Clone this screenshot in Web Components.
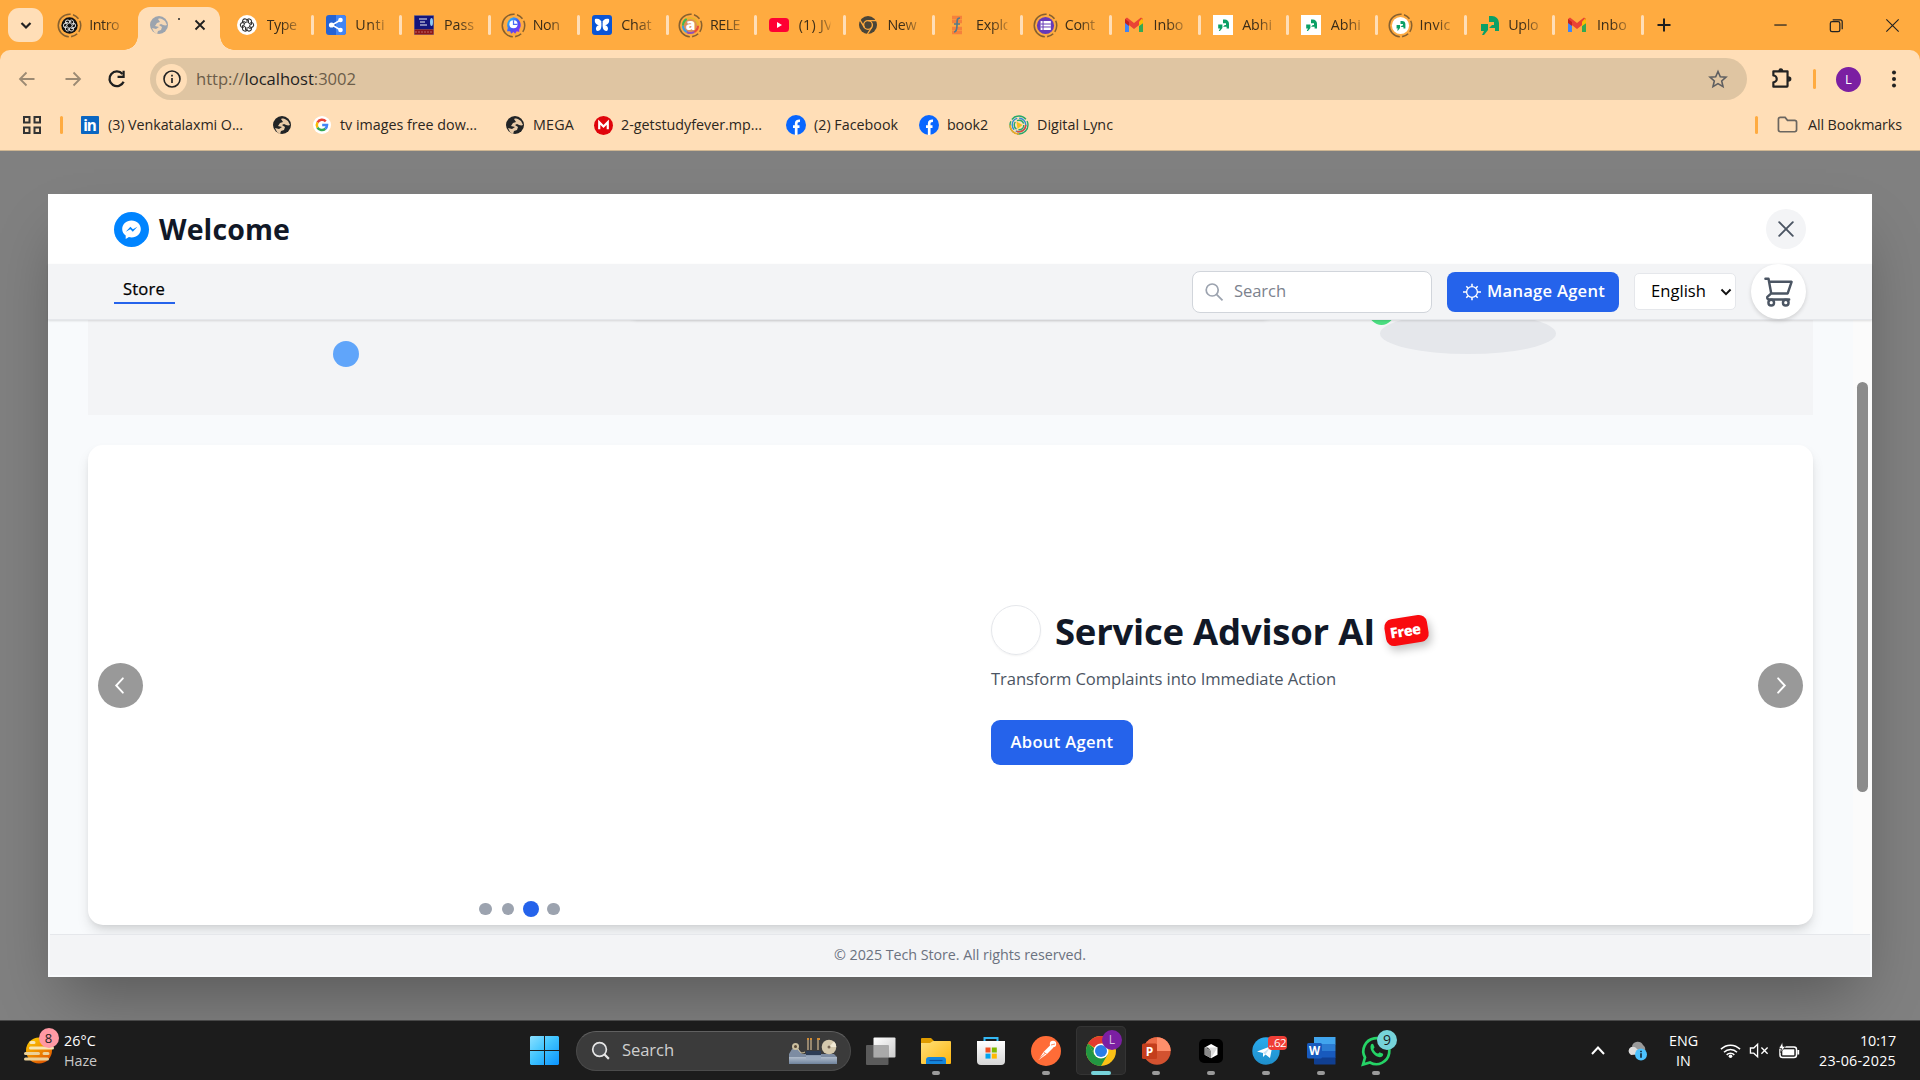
<!DOCTYPE html>
<html lang="en">
<head>
<meta charset="utf-8">
<title>Tech Store</title>
<style>
html,body{margin:0;height:100%;overflow:hidden}
body{font-family:"Open Sans","Noto Sans",sans-serif;background:#808080}
</style>
</head>
<body>
<desktop-screen></desktop-screen>
<script>
const define=(name,html,init)=>{
  const t=document.createElement('template');t.innerHTML=html;
  customElements.define(name,class extends HTMLElement{
    constructor(){super();this.attachShadow({mode:'open'}).append(t.content.cloneNode(true));}
    connectedCallback(){init&&init.call(this,this.shadowRoot);}
  });
};

/* One line of text tracked to occupy an exact width. */
define('fit-text','<style>:host{display:block;flex:none;white-space:pre;line-height:1.36}span{display:inline-block}</style><span><slot></slot></span>',function(r){
  const w=+this.getAttribute('w'),s=r.querySelector('span');
  this.style.width=w+'px';
  this.style.fontSize=this.getAttribute('size')+'px';
  const n=this.textContent.length;
  s.style.letterSpacing='0px';
  const nat=s.getBoundingClientRect().width;
  s.style.letterSpacing=((w-nat)/n)+'px';
});

const quote=c=>`<path fill="${c}" d="M2 9h7v6l-4 5H3l2-4H2zM10 1h3a7 7 0 0 1 7 7v8h-4v-3h-6l3-3h2V7h-5z"/>`;
const gmail='<path d="M1 4v13h4V9" fill="#4285f4"/><path d="M19 4v13h-4V9" fill="#34a853"/><path d="M15 5l4-2v5l-4 3z" fill="#fbbc04"/><path d="M1 4l2-1.500 7 5.500 7-5.500L19 4v3l-9 7-9-7z" fill="#ea4335"/><path d="M1 4l4 3v4L1 8z" fill="#c5221f"/><path d="M15 6.800l3-3.300 1 1.500v3l-4 3z" fill="#fbbc04"/>';
const ring='<circle cx="13" cy="13" r="11.700" fill="none" stroke="#86602f" stroke-width="1.600" stroke-dasharray="7 2.500 7 2.500 37 2.500 7 2.500"/>';
const inner=(s,k=.85)=>`${ring}<g transform="translate(${13-10*k} ${13-10*k}) scale(${k})">${s}</g>`;
const knot=c=>{let s='';for(let i=0;i<6;i++)s+=`<path transform="rotate(${i*60} 10 10)" d="M10 7.500V4.600a2.700 2.700 0 0 1 5 .8V9l-2.500 1.500" fill="none" stroke="${c}" stroke-width="1.200"/>`;return s;};
const globe=(a,b)=>`<circle cx="10" cy="10" r="9" fill="${a}"/><path fill="${b}" d="M9 4c3-1 4 0 7 2l2 4c-2 1-4 0-6-1l-2 1 3 2-1 3-3 1-1 3-3-2-2-4 4 1 3-2-4-1 2-3 3-1z" opacity=".9"/>`;
const cube='<path fill="#fff" d="M12 3l8 4.500v9L12 21l-8-4.500v-9z"/><path fill="#888" d="M4 7.500L12 12v9l-8-4.500z"/><path fill="#ddd" d="M4 7.500h16L12 21v-9z"/><path fill="#555" d="M12 12L4 7.500h4z"/>';
const facebook='<circle cx="10" cy="10" r="10" fill="#0866ff"/><path d="M10.200 20v-8M7 11.600h6.500M10.200 13V8.500q0-3 3.800-2.700" fill="none" stroke="#fff" stroke-width="2.700"/>';
const ic={
 down:['0 0 20 20','<path d="M5.500 8l4.500 4.500L14.500 8" fill="none" stroke="#222" stroke-width="2.200"/>'],
 gptDark:['0 0 26 26',inner('<circle cx="10" cy="10" r="10" fill="#111"/>'+knot('#ddd'))],
 gpt:['0 0 20 20','<circle cx="10" cy="10" r="10" fill="#fff"/><g transform="translate(1 1) scale(.9)">'+knot('#333')+'</g>'],
 globeGrey:['0 0 20 20',globe('#9ca4ae','#ffdeb7')],
 globe:['0 0 20 20',globe('#222426','#ffdeb7')],
 share:['0 0 20 20','<rect width="20" height="20" rx="3" fill="#2563d4"/><path d="M10 0h7a3 3 0 0 1 3 3v14a3 3 0 0 1-3 3h-7z" fill="#4285f4"/><path d="M14.500 5L6 10l8.500 5" fill="none" stroke="#fff" stroke-width="1.500"/><g fill="#fff"><circle cx="14.500" cy="5" r="2.300"/><circle cx="5.500" cy="10" r="2.600"/><circle cx="14.500" cy="15" r="2.300"/></g>'],
 pass:['0 0 20 20','<rect width="20" height="20" fill="#98807c"/><rect x=".5" y=".8" width="19" height="13.500" fill="#13147c"/><rect x=".5" y="14.500" width="19" height="5" fill="#8d1618"/><path d="M5 4h8M6 7h5M6 10h7" stroke="#a8a8cc" stroke-width="1.500"/><ellipse cx="17.500" cy="7" rx="1.500" ry="4" fill="#8fc8f0"/><path d="M1 17h17" stroke="#b66" stroke-dasharray="2 1"/>'],
 non:['0 0 26 26',`<defs><linearGradient id="g" x1="0" y1="0" x2="1" y2="1"><stop offset="0" stop-color="#16d6fa"/><stop offset=".55" stop-color="#4a50f4"/><stop offset="1" stop-color="#a02bf0"/></linearGradient></defs>`+inner('<path d="M10 0a9.500 9.500 0 0 1 7 15v3l-3-1-2 3-2-2-3 2-1-3-4 0 1-4A9.500 9.500 0 0 1 10 0z" fill="url(#g)"/><circle cx="10" cy="8.500" r="5" fill="#fff"/><path d="M10 3.500v5h5" fill="none" stroke="#4a6cf4" stroke-width="1.500"/>')],
 butterfly:['0 0 20 20','<rect width="20" height="20" rx="3" fill="#0a55d6"/><path fill="#fff" d="M3 4c4-1 6 1 7 4 1-3 3-5 7-4 1 4-2 6-4 6 3 1 4 4 2 6-3 0-4-2-5-5-1 3-2 5-5 5-2-2-1-5 2-6-2 0-5-2-4-6z"/><path d="M10 7v9" stroke="#0a55d6" stroke-width="1.200"/>'],
 rele:['0 0 26 26',inner('<circle cx="10" cy="10" r="9" fill="none" stroke="#e94b3c" stroke-width="3" stroke-dasharray="9.400 47"/><circle cx="10" cy="10" r="9" fill="none" stroke="#8e54b8" stroke-width="3" stroke-dasharray="9.400 47" stroke-dashoffset="-9.400"/><circle cx="10" cy="10" r="9" fill="none" stroke="#3d9ce0" stroke-width="3" stroke-dasharray="9.400 47" stroke-dashoffset="-18.800"/><circle cx="10" cy="10" r="9" fill="none" stroke="#46b450" stroke-width="3" stroke-dasharray="9.400 47" stroke-dashoffset="-28.200"/><circle cx="10" cy="10" r="9" fill="none" stroke="#e8b52c" stroke-width="3" stroke-dasharray="19 38" stroke-dashoffset="-37.600"/><circle cx="10" cy="10" r="8" fill="#dc8f55"/><text x="10" y="16" text-anchor="middle" font-size="19" font-weight="800" fill="#fff">a</text>')],
 youtube:['0 0 20 20','<rect y="3" width="20" height="14" rx="3.500" fill="#ff0033"/><path d="M8 7l5 3-5 3z" fill="#fff"/>'],
 chromeDark:['0 0 20 20','<circle cx="10" cy="10" r="9" fill="#4a4538"/><circle cx="10" cy="10" r="4.400" fill="none" stroke="#ffab40" stroke-width="1.400"/><path d="M10 5.600h8.500M6.200 12.200L2 5M13.800 12.200L9.500 19" stroke="#ffab40" stroke-width="1.400"/>'],
 italic:['0 0 20 20','<path d="M5 2.500h10M5 6.500h10M5 13.500h10M5 17.500h10" stroke="#f5813c" stroke-width="3.500"/><path d="M13 3c-3 0-3 2-3 7s-1 7-3 7M7 9h6" fill="none" stroke="#56798a" stroke-width="1.700"/>'],
 form:['0 0 26 26',inner('<circle cx="10" cy="10" r="10.500" fill="#673ab7"/><rect x="4" y="4.500" width="12.500" height="11" fill="#fff"/><path d="M4 8.200h12.500M4 11.800h12.500M7 4v12" stroke="#673ab7" stroke-width="1.200"/>')],
 gmail:['0 0 20 20',gmail],
 abhi:['0 0 20 20','<rect width="20" height="20" fill="#fff"/><g transform="translate(4 4) scale(.6)">'+quote('#0ba066')+'</g>'],
 invic:['0 0 26 26',inner('<circle cx="10" cy="10" r="10.500" fill="#fff"/><g transform="translate(4 4) scale(.6)">'+quote('#0ba066')+'</g>')],
 uplo:['0 0 20 20',quote('#0ba066')],
 plus:['0 0 20 20','<path d="M10 3.500v13M3.500 10h13" stroke="#1f1f1f" stroke-width="2"/>'],
 tabx:['0 0 20 20','<path d="M5 5l10 10M15 5L5 15" stroke="#1f1f1f" stroke-width="2"/>'],
 min:['0 0 20 20','<path d="M3.500 9.500h13" stroke="#222" stroke-width="1.300"/>'],
 restore:['0 0 20 20','<rect x="3.500" y="6" width="10" height="10.500" rx="1.800" fill="none" stroke="#222" stroke-width="1.300"/><path d="M6 4h8a2 2 0 0 1 2 2v8" fill="none" stroke="#222" stroke-width="1.300"/>'],
 close:['0 0 20 20','<path d="M3.500 3.500l13 13M16.500 3.500l-13 13" stroke="#222" stroke-width="1.200"/>'],
 back:['0 0 20 20','<path d="M17.500 10H3.500M9.500 3.500L3 10l6.500 6.500" fill="none" stroke="#9c8a73" stroke-width="1.800"/>'],
 fwd:['0 0 20 20','<path d="M2.500 10h14M10.500 3.500L17 10l-6.500 6.500" fill="none" stroke="#9c8a73" stroke-width="1.800"/>'],
 reload:['0 0 20 20','<path d="M16 12.500A6.700 6.700 0 1 1 15 5.500" fill="none" stroke="#1f1f1f" stroke-width="2.100"/><path d="M17 2.500v6.500h-6.500V7H15V2.500z" fill="#1f1f1f"/>'],
 info:['0 0 20 20','<circle cx="10" cy="10" r="8" fill="none" stroke="#222" stroke-width="1.600"/><path d="M10 9v5M10 5.800v1.700" stroke="#222" stroke-width="1.700"/>'],
 star:['0 0 20 20','<path d="M10 2.500l2.300 5.200 5.700.5-4.300 3.800 1.300 5.600-5-3-5 3 1.300-5.600L2 8.200l5.700-.5z" fill="none" stroke="#5f5f60" stroke-width="1.600"/>'],
 puzzle:['0 0 22 22','<path d="M4 4h13v13.500q0 .5-.5.500H4V14a3 3 0 0 0 0-6.200z" fill="none" stroke="#222" stroke-width="2" stroke-linejoin="round"/><path d="M8.500 4a2.300 2.800 0 0 1 4.600 0M17.500 8.500a2.800 2.300 0 0 1 0 5" fill="#222"/>'],
 dots:['0 0 20 20','<g fill="#222"><circle cx="10" cy="3.500" r="2"/><circle cx="10" cy="10" r="2"/><circle cx="10" cy="16.500" r="2"/></g>'],
 apps:['0 0 20 20','<g fill="none" stroke="#333" stroke-width="2"><rect x="2" y="2" width="5.500" height="5.500"/><rect x="12.500" y="2" width="5.500" height="5.500"/><rect x="2" y="12.500" width="5.500" height="5.500"/><rect x="12.500" y="12.500" width="5.500" height="5.500"/></g>'],
 linkedin:['0 0 20 20','<rect width="20" height="20" rx="1" fill="#0a66c2"/><text x="10" y="16.500" text-anchor="middle" font-size="17" font-weight="700" fill="#fff" textLength="15">in</text>'],
 google:['0 0 20 20','<circle cx="10" cy="10" r="10" fill="#fff"/><g fill="none" stroke-width="2.800"><path d="M14.200 6A5.700 5.700 0 0 0 5 7.200" stroke="#ea4335"/><path d="M5 7.200a5.700 5.700 0 0 0 0 5.600" stroke="#fbbc05"/><path d="M5 12.800a5.700 5.700 0 0 0 8.700 1.400" stroke="#34a853"/><path d="M13.700 14.200A5.700 5.700 0 0 0 15.600 10H10.200" stroke="#4285f4"/></g>'],
 mega:['0 0 20 20','<circle cx="10" cy="10" r="10" fill="#e0040b"/><path d="M5.500 14V6.500l4.500 4.500 4.500-4.500V14" fill="none" stroke="#fff" stroke-width="2.300"/>'],
 facebook:['0 0 20 20',facebook],
 lync:['0 0 20 20','<g fill="none" stroke-width="1.400"><circle cx="10" cy="10" r="9" stroke="#28a86a" stroke-dasharray="16 2 14 2" /><circle cx="10" cy="10" r="9" stroke="#f5a623" stroke-dasharray="14 42.500" stroke-dashoffset="-14"/><circle cx="10" cy="10" r="6.800" stroke="#2d8fd8" stroke-dasharray="14 2"/><circle cx="10" cy="10" r="6.800" stroke="#e2463a" stroke-dasharray="13 30"/><circle cx="10" cy="10" r="4.800" stroke="#28a86a" stroke-dasharray="8 2"/></g><path d="M7.500 6.500l6 3.500-5 4z" fill="#f6c11e"/>'],
 folder:['0 0 22 18','<path d="M1.500 3.500q0-2 2-2h5l2.500 3h7.500q2 0 2 2v8q0 2-2 2h-15q-2 0-2-2z" fill="none" stroke="#6b6660" stroke-width="1.800"/>'],
 messenger:['0 0 35 35','<circle cx="17.500" cy="17.500" r="17.500" fill="#0084ff"/><path d="M17.500 8.500c-5.400 0-9.300 3.800-9.300 8.500 0 2.700 1.300 5 3.500 6.600v3.300l3.200-1.800c.8.300 1.700.4 2.600.4 5.400 0 9.300-3.900 9.300-8.500s-3.900-8.500-9.300-8.500z" fill="#fff"/><path d="M11.800 19.800l4.600-5 2.500 2.500 4.500-2.500-4.600 5-2.500-2.500z" fill="#0084ff"/>'],
 x:['0 0 20 20','<path d="M3.200 3.200l13.600 13.600M16.800 3.200L3.200 16.800" stroke="#4b5563" stroke-width="1.900" stroke-linecap="round"/>'],
 lens:['0 0 20 20','<circle cx="8.200" cy="8" r="6" fill="none" stroke="#9ca3af" stroke-width="1.700"/><path d="M12.500 12.300l6 6" stroke="#9ca3af" stroke-width="1.700"/>'],
 gear:['0 0 20 20','<circle cx="10" cy="10" r="5.400" fill="none" stroke="#fff" stroke-width="1.300"/><path d="M10 4.500V1.700M10 15.500v2.800M4.500 10H1M15.500 10H19M6 6L4.300 4.200M14 6l1.700-1.800M6 14l-1.700 1.800M14 14l1.700 1.800" stroke="#fff" stroke-width="1.500"/>'],
 chev:['0 0 20 20','<path d="M3.500 6.500l6.500 6.500 6.500-6.500" fill="none" stroke="#111" stroke-width="2.800"/>'],
 cart:['0 0 32 32','<g fill="none" stroke="#4b5563" stroke-width="2.500" stroke-linejoin="round" stroke-linecap="round"><path d="M2.500 2.800h3.200L8.500 18h17L29.500 6H6.500M8.500 18l-4 3.500q-.6 2.700 2 2.700h20.500"/><circle cx="8.500" cy="27.500" r="2.900"/><circle cx="23.500" cy="27.500" r="2.900"/></g>'],
 left:['0 0 20 20','<path d="M12.500 2.500L5.500 10l7 7.500" fill="none" stroke="#fff" stroke-width="2" stroke-linecap="round"/>'],
 right:['0 0 20 20','<path d="M7.500 2.500l7 7.500-7 7.500" fill="none" stroke="#fff" stroke-width="2" stroke-linecap="round"/>'],
 haze:['0 0 30 30','<defs><linearGradient id="h" x1="0" y1="0" x2=".6" y2="1"><stop offset="0" stop-color="#ffd500"/><stop offset="1" stop-color="#e25a00"/></linearGradient></defs><circle cx="15" cy="14.500" r="13" fill="url(#h)"/><g stroke="#f8e6b4" stroke-width="3" stroke-linecap="round"><path d="M7 6.500h3M6.500 12h22"/><path d="M1.500 17.500h13M20 17.500h4M1.500 23h22" stroke="#ecd29a"/></g>'],
 win:['0 0 29 29','<defs><linearGradient id="w" x1="0" y1="0" x2="29" y2="29" gradientUnits="userSpaceOnUse"><stop offset="0" stop-color="#8be0ff"/><stop offset=".45" stop-color="#41c5ff"/><stop offset="1" stop-color="#0a93ff"/></linearGradient></defs><path fill="url(#w)" d="M1 0h13v14H0V1zM15 0h13l1 1v13H15zM0 15h14v14H1l-1-1zM15 15h14v13l-1 1H15z"/>'],
 search:['0 0 20 20','<circle cx="9" cy="9" r="7.200" fill="#515356" stroke="#e6e6e6" stroke-width="1.800"/><path d="M14.300 14.300l4.500 4.500" stroke="#e6e6e6" stroke-width="2.300"/>'],
 engine:['0 0 50 28','<defs><linearGradient id="e" x1="0" y1="0" x2="0" y2="1"><stop offset="0" stop-color="#b0bccb"/><stop offset="1" stop-color="#70839c"/></linearGradient></defs><path d="M4 12l5-2 5 7h4l3-3h9l2 3h14l3 3v3H1v-6z" fill="#7d8ca2"/><rect x="1" y="20" width="48" height="7" fill="url(#e)"/><path d="M20 2v11M23 2v11M30 2v11" stroke="#c8b08b" stroke-width="1.300"/><path d="M19 2h2M22 2h2M29 2h3" stroke="#d08b35" stroke-width="2"/><rect x="18" y="14" width="15" height="4" fill="#2d3d56"/><rect x="18" y="18.500" width="15" height="4" fill="#97a7bc"/><circle cx="41" cy="10" r="7.300" fill="#d5c9ad"/><path d="M41 10l5-5.500A7.300 7.300 0 0 1 48.300 10z" fill="#f1e9d4"/><circle cx="41" cy="10" r="1.500" fill="#765"/><circle cx="7.500" cy="9.500" r="3.500" fill="#cbbf9f"/><circle cx="7.500" cy="9.500" r="1.500" fill="#5b4a36"/><path d="M10 12q3 6 7 3" fill="none" stroke="#d9c9a0"/>'],
 taskview:['0 0 30 30','<defs><linearGradient id="t" x1="0" y1="0" x2="1" y2="1"><stop offset="0" stop-color="#fff"/><stop offset="1" stop-color="#ccc"/></linearGradient></defs><rect x="7.500" y="1.500" width="22" height="20" rx="1" fill="url(#t)"/><rect x="0" y="9" width="22.500" height="20" rx="1" fill="#666" opacity=".85"/><path d="M7.500 9h15v12.500h-15z" fill="#aaa"/>'],
 files:['0 0 30 30','<defs><linearGradient id="f" x1="0" y1="0" x2="1" y2="1"><stop offset="0" stop-color="#ffe07a"/><stop offset="1" stop-color="#ffb60d"/></linearGradient></defs><path d="M0 3q0-1 1-1h9l3 3v5H0z" fill="#e09c00"/><path d="M0 7h9l3-2h17q1 0 1 1v21q0 1-1 1H1q-1 0-1-1z" fill="url(#f)"/><path d="M5 28v-4q0-3 3-3h14q3 0 3 3v4z" fill="#1486dc"/><path d="M8.500 24.500h13" stroke="#0b4f9e" stroke-width="1.200"/>'],
 store:['0 0 30 30','<path d="M8.500 6V2h13v4" fill="none" stroke="#34b8f4" stroke-width="2"/><defs><linearGradient id="s" x1="0" y1="0" x2="0" y2="1"><stop offset="0" stop-color="#fff"/><stop offset="1" stop-color="#d6d6d6"/></linearGradient></defs><path d="M1 5h28v20q0 4-4 4H5q-4 0-4-4z" fill="url(#s)"/><path d="M9.500 11.500h5v5h-5z" fill="#f25022"/><path d="M15.800 11.500h5v5h-5z" fill="#7fba00"/><path d="M9.500 17.600h5v5h-5z" fill="#00a4ef"/><path d="M15.800 17.600h5v5h-5z" fill="#ffb900"/>'],
 postman:['0 0 30 30','<circle cx="15" cy="15" r="15" fill="#ff6c37"/><path d="M7.500 24l5-8 7-7 3 2.500-7 7z" fill="#fff"/><path d="M12.500 16l3.500 2.500M8 23l6-5.500" stroke="#ff6c37" stroke-width=".8"/><circle cx="22" cy="8" r="3.200" fill="#fff"/><path d="M20 9l4-1" stroke="#ff6c37" stroke-width=".8"/>'],
 chrome:['0 0 30 30','<circle cx="15" cy="15" r="15" fill="#fbc116"/><path d="M15 15L2 7.500A15 15 0 0 1 28 7.500H15z" fill="#e33b2e"/><path d="M2 7.500A15 15 0 0 0 15 30l6.500-11.200L15 15 8.500 18.800z" fill="#229642"/><path d="M15 15L2 7.500 4 5h11z" fill="#e33b2e"/><path d="M2 7.500L8.500 18.800 12 15z" fill="#229642"/><circle cx="15" cy="15" r="7.500" fill="#fff"/><circle cx="15" cy="15" r="6" fill="#2a7de8"/>'],
 ppt:['0 0 30 30','<circle cx="16" cy="15" r="13.700" fill="#d35230"/><path d="M16 1.300A13.700 13.700 0 0 1 29.700 15H16z" fill="#ff8f6b"/><path d="M16 1.300V15H2.300A13.700 13.700 0 0 1 16 1.300z" fill="#ed6c47"/><rect x="1" y="7.500" width="15" height="15.500" rx="1.500" fill="#c43e1c"/><text x="8.500" y="19.500" text-anchor="middle" font-size="12" font-weight="700" fill="#fff">P</text>'],
 cursor:['0 0 30 30','<rect x="3" y="3" width="24" height="24" rx="5" fill="#000"/><g transform="translate(5.500 5.500) scale(.8)">'+cube+'</g>'],
 telegram:['0 0 30 30','<defs><linearGradient id="tg" x1="0" y1="0" x2="0" y2="1"><stop offset="0" stop-color="#2aabee"/><stop offset="1" stop-color="#1f8fcb"/></linearGradient></defs><circle cx="15" cy="15" r="13.700" fill="url(#tg)"/><path d="M6 15.500L21.500 9.500 19 22l-4.500-3.500-2.500 2.500v-4z" fill="#fff"/><path d="M12 17l7-5.500-4.500 7" fill="#c8e2f3"/>'],
 word:['0 0 30 30','<path d="M8 1h21.500v7.500H8z" fill="#41a5ee"/><path d="M8 8h21.500v7H8z" fill="#2b7cd3"/><path d="M8 15h21.500v7H8z" fill="#185abd"/><path d="M8 21.500h21.500V28q0 .5-.5.500H9q-1 0-1-1z" fill="#103f91"/><rect x="1" y="7" width="15" height="15.500" rx="1.500" fill="#185abd"/><text x="8.500" y="19" text-anchor="middle" font-size="11.500" font-weight="700" fill="#fff">W</text>'],
 whatsapp:['0 0 30 30','<path d="M2 28.500l2-7A13 13 0 1 1 9 26.500z" fill="none" stroke="#25d366" stroke-width="2.700"/><path d="M10 8.500c1-1 2-1 2.500.2l1 2.500c.2.600-1.300 1.500-1 2.200 1 2 2.300 3.200 4.300 4.200.7.300 1.500-1.500 2.200-1.200l2.600 1.200c1 .6.500 2.200-.5 3-5 3-14-6-11.100-12.100z" fill="#25d366"/>'],
 up:['0 0 20 20','<path d="M4 13l6-6.500 6 6.500" fill="none" stroke="#fff" stroke-width="2"/>'],
 cloud:['0 0 22 20','<path d="M6 5a6 6 0 0 1 11-1q3 2 2 6l-9 4z" fill="#999"/><path d="M5 14a4.500 4.500 0 0 1 0-8q4-1 6 2l6 5z" fill="#ddd"/><circle cx="15" cy="13.500" r="6" fill="#4cc2ff"/><path d="M15 12.300v4.500M15 9.800v1.500" stroke="#123" stroke-width="1.600"/>'],
 wifi:['0 0 22 18','<g fill="none" stroke="#fff" stroke-width="1.600"><path d="M1 7.500a14 14 0 0 1 20 0M4.200 10.700a9.500 9.500 0 0 1 13.600 0M7 13.500a5.500 5.500 0 0 1 8 0"/></g><circle cx="11" cy="15" r="1.900" fill="#fff"/>'],
 mute:['0 0 22 18','<path d="M1.500 6.300h3.500l4-3.800v13l-4-3.800H1.500z" fill="none" stroke="#fff" stroke-width="1.400"/><path d="M13 5.800l6.500 6.500M19.500 5.800L13 12.300" stroke="#fff" stroke-width="1.400"/>'],
 battery:['0 0 22 18','<rect x="2" y="5" width="16.500" height="10.500" rx="2.500" fill="none" stroke="#fff" stroke-width="1.500"/><rect x="4.300" y="7.300" width="12" height="6" fill="#fff"/><path d="M20.300 8v4.500" stroke="#fff" stroke-width="1.800"/><path d="M4.500 0L.8 6.500h2.800L2.500 10.500l5-6H5z" fill="#fff" stroke="#1c1c1c" stroke-width=".7"/>']
};
define('ui-icon','<style>:host{display:block;flex:none;line-height:0}svg{display:block;width:100%;height:100%;overflow:visible;font-family:"Open Sans",sans-serif}</style><svg aria-hidden="true"></svg>',function(r){
  const [vb,body]=ic[this.getAttribute('name')],s=r.querySelector('svg');
  s.setAttribute('viewBox',vb);s.innerHTML=body;
  const [,,w,h]=vb.split(' ').map(Number),size=+this.getAttribute('size')||w;
  this.style.width=size+'px';this.style.height=size*h/w+'px';
});

define('browser-tab',`<style>
:host{display:flex;align-items:center;flex:none;width:88.690px;height:50px;color:#3a2c18;position:relative}
i{width:3px;height:20px;border-radius:2px;background:#ffdeb7;flex:none}
:host([nosep]) i{background:none}
.ic{width:30px;margin-left:7px;display:flex;justify-content:center;flex:none}
.t{margin-left:4.500px;width:32px;overflow:hidden;-webkit-mask:linear-gradient(90deg,#000 45%,rgba(0,0,0,.35) 95%,transparent)}
</style><i></i><div class="ic"></div><div class="t"></div>`,function(r){
  const n=this.getAttribute('icon'),big=ic[n][0]==='0 0 26 26';
  r.querySelector('.ic').innerHTML=`<ui-icon name="${n}" size="${big?25:20}"></ui-icon>`;
  r.querySelector('.t').innerHTML=`<fit-text w="${this.getAttribute('w')||30}" size="14.300"></fit-text>`;
  const f=r.querySelector('fit-text');f.textContent=this.getAttribute('label');f.connectedCallback();
});

define('active-tab',`<style>
:host{display:flex;flex:none;width:88.690px;height:50px;align-items:flex-end}
.b{position:relative;margin-left:5px;width:81.500px;height:43px;background:#ffdeb7;border-radius:12px 12px 0 0;display:flex;align-items:center;box-sizing:border-box;padding:0 11px;padding-bottom:7px}
.b:before,.b:after{content:"";position:absolute;bottom:0;width:14px;height:14px}
.b:before{left:-14px;background:radial-gradient(circle at 0 0,transparent 13.500px,#ffdeb7 14px)}
.b:after{right:-14px;background:radial-gradient(circle at 100% 0,transparent 13.500px,#ffdeb7 14px)}
s{width:2px;height:2px;background:#333;opacity:.8;margin:-12px 0 0 9px}
.x{margin-left:auto}
</style><div class="b"><ui-icon name="globeGrey" size="20"></ui-icon><s></s><ui-icon class="x" name="tabx" size="18"></ui-icon></div>`);

define('tab-strip',`<style>
:host{display:flex;height:50px;background:#ffab40;align-items:center}
.d{width:35px;height:34px;margin-left:8px;margin-right:1.700px;border-radius:11px;background:#ffdeb7;display:flex;align-items:center;justify-content:center;flex:none}
i{width:3px;height:20px;border-radius:2px;background:#ffdeb7}
.w{display:flex;margin-left:auto;gap:37px;padding-right:18px}
</style><div class="d"><ui-icon name="down" size="20"></ui-icon></div>
<browser-tab nosep icon="gptDark" label="Intro"></browser-tab><active-tab></active-tab>
<browser-tab nosep icon="gpt" label="Type"></browser-tab><browser-tab icon="share" label="Unti"></browser-tab>
<browser-tab icon="pass" label="Pass"></browser-tab><browser-tab icon="non" label="Non" w="27"></browser-tab>
<browser-tab icon="butterfly" label="Chat"></browser-tab><browser-tab icon="rele" label="RELE"></browser-tab>
<browser-tab icon="youtube" label="(1) JV" w="34"></browser-tab><browser-tab icon="chromeDark" label="New" w="29"></browser-tab>
<browser-tab icon="italic" label="Explo" w="35"></browser-tab><browser-tab icon="form" label="Cont"></browser-tab>
<browser-tab icon="gmail" label="Inbo"></browser-tab><browser-tab icon="abhi" label="Abhi"></browser-tab>
<browser-tab icon="abhi" label="Abhi"></browser-tab><browser-tab icon="invic" label="Invic" w="31"></browser-tab>
<browser-tab icon="uplo" label="Uplo"></browser-tab><browser-tab icon="gmail" label="Inbo"></browser-tab>
<i></i><ui-icon name="plus" size="20" style="margin-left:10px"></ui-icon>
<div class="w"><ui-icon name="min" size="19"></ui-icon><ui-icon name="restore" size="19"></ui-icon><ui-icon name="close" size="19"></ui-icon></div>`);

define('address-bar',`<style>
:host{display:flex;height:58px;align-items:center;background:#ffdeb7;box-shadow:none;color:#222}
.o{display:flex;align-items:center;width:1597px;height:42px;border-radius:21px;background:#dfc5a2;margin-left:22px;box-sizing:border-box;padding:0 19px 0 6px;color:#6c5d49}
.i{width:31px;height:31px;border-radius:50%;background:#ffdeb7;display:flex;align-items:center;justify-content:center;margin-right:9px}
b{font-weight:400;color:#1f1f1f}
.s{width:3px;height:20px;border-radius:2px;background:#ffab40;margin-left:20px}
.a{width:25px;height:25px;border-radius:50%;background:#7b1fa2;color:#fff;display:flex;align-items:center;justify-content:center;font-size:13px;margin-left:20px}
</style><ui-icon name="back" size="20" style="margin-left:17px"></ui-icon><ui-icon name="fwd" size="20" style="margin-left:26px"></ui-icon><ui-icon name="reload" size="22" style="margin-left:23px"></ui-icon>
<div class="o"><div class="i"><ui-icon name="info" size="20"></ui-icon></div><fit-text w="160" size="16.600">http://<b>localhost</b>:3002</fit-text><ui-icon name="star" size="20" style="margin-left:auto"></ui-icon></div>
<ui-icon name="puzzle" size="24" style="margin-left:22px"></ui-icon><div class="s"></div><div class="a">L</div><ui-icon name="dots" size="20" style="margin-left:23px"></ui-icon>`);

define('bookmark-link',`<style>:host{display:flex;align-items:center;flex:none;color:#2c2620}ui-icon{margin-right:var(--g,9px)}</style><ui-icon size="18"></ui-icon><slot></slot>`,function(r){
  const i=r.querySelector('ui-icon');i.setAttribute('name',this.getAttribute('icon'));
  i.setAttribute('size',this.getAttribute('isize')||18);i.replaceWith(i.cloneNode());
});
define('bookmarks-bar',`<style>
:host{display:flex;height:43px;align-items:center;background:#ffdeb7;border-bottom:1px solid #cfb692;box-sizing:border-box;padding-bottom:8px}
i{width:3px;height:18px;border-radius:2px;background:#ffab40;flex:none}
</style><ui-icon name="apps" size="20" style="margin-left:22px"></ui-icon><i style="margin-left:18px;margin-right:18px"></i>
<bookmark-link icon="linkedin"><fit-text w="135" size="14.300">(3) Venkatalaxmi O...</fit-text></bookmark-link>
<bookmark-link icon="globe" isize="20" style="margin-left:29px;--g:0px"></bookmark-link>
<bookmark-link icon="google" style="margin-left:21px"><fit-text w="137" size="14.300">tv images free dow...</fit-text></bookmark-link>
<bookmark-link icon="globe" isize="20" style="margin-left:28px;--g:8px"><fit-text w="41" size="14.300">MEGA</fit-text></bookmark-link>
<bookmark-link icon="mega" isize="19" style="margin-left:20px;--g:8px"><fit-text w="141" size="14.300">2-getstudyfever.mp...</fit-text></bookmark-link>
<bookmark-link icon="facebook" isize="20" style="margin-left:24px;--g:8px"><fit-text w="84" size="14.300">(2) Facebook</fit-text></bookmark-link>
<bookmark-link icon="facebook" isize="20" style="margin-left:21px;--g:8px"><fit-text w="41" size="14.300">book2</fit-text></bookmark-link>
<bookmark-link icon="lync" isize="20" style="margin-left:21px;--g:8px"><fit-text w="76" size="14.300">Digital Lync</fit-text></bookmark-link>
<i style="margin-left:auto"></i><bookmark-link icon="folder" isize="21" style="margin:0 18px 0 19px;--g:10px"><fit-text w="94" size="14.300">All Bookmarks</fit-text></bookmark-link>`);

define('browser-chrome',`<style>:host{display:block;background:#ffab40;height:151px}div{border-radius:10px 10px 0 0;overflow:hidden}</style><tab-strip></tab-strip><div><address-bar></address-bar><bookmarks-bar></bookmarks-bar></div>`);

define('modal-header',`<style>
:host{display:flex;height:70px;align-items:center;background:#fff;padding:0 66px;color:#111827;font-weight:700;flex:none}
.x{margin-left:auto;width:40px;height:40px;border-radius:50%;background:#f3f4f6;display:flex;align-items:center;justify-content:center}
</style><ui-icon name="messenger" size="35"></ui-icon><fit-text w="131" size="28.500" style="margin-left:10px;margin-top:1px;font-weight:700">Welcome</fit-text><div class="x"><ui-icon name="x" size="20"></ui-icon></div>`);

define('store-nav',`<style>
:host{display:flex;height:55px;align-items:center;background:#f3f4f6;padding:0 66px;box-shadow:0 1px 2px rgba(0,0,0,.12);position:relative;z-index:1;flex:none;border-bottom:1px solid #e5e7eb}
.s{height:26px;border-bottom:2px solid #2563eb;padding:0 10px 0 9px;color:#000;display:flex;align-items:center;margin-bottom:3px;margin-top:0}
.in{margin-left:auto;width:240px;height:42px;box-sizing:border-box;border:1px solid #d1d5db;border-radius:8px;background:#fff;display:flex;align-items:center;padding-left:11px;color:#7c828d;gap:10px}
.m{margin-left:15px;width:172px;height:40px;box-sizing:border-box;border-radius:8px;background:#2563eb;color:#fff;display:flex;align-items:center;padding-left:15px;gap:5px}
.e{margin-left:15px;width:102px;height:37px;box-sizing:border-box;border:1px solid #e5e7eb;border-radius:5px;background:#fff;display:flex;align-items:center;padding-left:16px;gap:13px}
.c{margin-left:15px;width:55px;height:55px;border-radius:50%;background:#fff;box-shadow:0 2px 4px rgba(0,0,0,.14);display:flex;align-items:center;justify-content:center}
</style><div class="s"><fit-text w="42" size="16.600" style="-webkit-text-stroke:.25px #000">Store</fit-text></div>
<div class="in"><ui-icon name="lens" size="20"></ui-icon><fit-text w="52" size="16.600">Search</fit-text></div>
<div class="m"><ui-icon name="gear" size="20"></ui-icon><fit-text w="118" size="16.600" style="font-weight:600">Manage Agent</fit-text></div>
<div class="e"><fit-text w="55" size="16.600">English</fit-text><ui-icon name="chev" size="14"></ui-icon></div>
<div class="c"><ui-icon name="cart" size="31"></ui-icon></div>`);

define('hero-strip',`<style>
:host{display:block;height:95px;background:#f3f4f6;position:relative;overflow:hidden;margin-top:0}
i{position:absolute}
.b{left:245px;top:21px;width:26px;height:26px;border-radius:50%;background:#60a5fa}
.g{left:1281px;top:-20px;width:25px;height:25px;border-radius:50%;background:#4ade80}
.e{left:1292px;top:-7px;width:176px;height:41px;border-radius:50%;background:#e5e7eb}
.s{left:540px;top:-20px;width:644px;height:19px;border-radius:15px;box-shadow:0 1px 4px rgba(0,0,0,.12)}
</style><i class="s"></i><i class="b"></i><i class="g"></i><i class="e"></i>`);

define('agent-slide',`<style>
:host{display:flex;position:relative;height:480px;margin-top:30px;background:#fff;border-radius:15px;box-shadow:0 8px 14px -2px rgba(0,0,0,.13),0 3px 6px -2px rgba(0,0,0,.08);align-items:center;box-sizing:border-box;padding:0 10px}
.n{width:45px;height:45px;border-radius:50%;background:#999;display:flex;align-items:center;justify-content:center;flex:none}
.n.r{margin-left:auto}
.c{margin-left:848px;display:flex;flex-direction:column;align-items:flex-start;height:160px;color:#111827}
.h{display:flex;align-items:center;height:50px}
.o{width:50px;height:50px;box-sizing:border-box;border:1px solid #e5e7eb;border-radius:50%;box-shadow:0 1px 2px rgba(0,0,0,.05)}
.f{width:43px;height:27px;margin-left:10px;margin-top:1px;border-radius:8px;background:#f90b0f;color:#fff;transform:rotate(-9deg);display:flex;align-items:center;justify-content:center;box-shadow:2px 5px 9px rgba(0,0,0,.24)}
.p{color:#4b5563;margin-top:13px}
.a{margin-top:29px;width:142px;height:45px;border-radius:9px;background:#2563eb;color:#fff;display:flex;align-items:center;justify-content:center}
.d{position:absolute;left:391px;bottom:8px;display:flex;align-items:center}
.d i{width:12.500px;height:12.500px;border-radius:50%;background:#9ca3af}
</style><div class="n"><ui-icon name="left" size="19"></ui-icon></div>
<div class="c"><div class="h"><div class="o"></div><fit-text w="320" size="36.500" style="font-weight:700;margin-left:14px;margin-top:4px">Service Advisor AI</fit-text><div class="f"><fit-text w="33" size="14.500" style="font-weight:800">Free</fit-text></div></div>
<fit-text class="p" w="345" size="16.600">Transform Complaints into Immediate Action</fit-text>
<div class="a"><fit-text w="103" size="16.600" style="font-weight:600">About Agent</fit-text></div></div>
<div class="n r"><ui-icon name="right" size="19"></ui-icon></div>
<div class="d"><i></i><i style="margin-left:10px"></i><i style="margin-left:8.500px;width:16px;height:16px;background:#2563eb"></i><i style="margin-left:8.500px"></i></div>`);

define('store-body',`<style>
:host{display:flex;flex:1;min-height:0;background:#f9fafb;background:#f8fafc;overflow:hidden}
.m{flex:1;padding:0 40px}
.t{width:19px;background:#fbfbfb;flex:none;box-sizing:border-box;padding:62px 0 0 4px}
.t i{display:block;width:11px;height:410px;border-radius:6px;background:#8b8b8b}
</style><div class="m"><hero-strip></hero-strip><agent-slide></agent-slide></div><div class="t"><i></i></div>`);

define('store-modal',`<style>
:host{display:flex;flex-direction:column;width:1824px;height:783px;background:#f8fafc;box-shadow:0 31px 62px -15px rgba(0,0,0,.33)}
.f{height:40px;margin:0 2px 2px;border-top:1px solid #e5e7eb;background:#f3f4f6;color:#6b7280;display:flex;align-items:center;justify-content:center;flex:none}
</style><modal-header></modal-header><store-nav></store-nav><store-body></store-body><div class="f"><fit-text w="252" size="14.300">© 2025 Tech Store. All rights reserved.</fit-text></div>`);

define('task-app',`<style>
:host{display:flex;position:relative;width:50px;height:49px;margin-right:5px;flex:none;align-items:center;justify-content:center;border-radius:5px;box-sizing:border-box}
:host([active]){background:#292929;box-shadow:inset 0 0 0 1px #343434}
i{position:absolute;bottom:0;width:8px;height:4px;border-radius:2px;background:#9a9a9a}
:host([active]) i{width:20px;background:#76d3da}:host([idle]) i{display:none}
.b{position:absolute;top:4px;left:26px;width:20px;height:20px;border-radius:50%;display:flex;align-items:center;justify-content:center;font-size:14px;line-height:1}
</style><ui-icon></ui-icon><i></i>`,function(r){
  const u=document.createElement('ui-icon');u.setAttribute('name',this.getAttribute('icon'));u.setAttribute('size','30');
  r.querySelector('ui-icon').replaceWith(u);
  const b=this.getAttribute('badge');
  if(b){const d=document.createElement('div');d.className='b';d.textContent=b;d.style.cssText=this.getAttribute('bs');r.append(d);}
});
customElements.get('ui-icon').prototype.connectedCallback=(f=>function(){if(this.hasAttribute('name'))f.call(this);})(customElements.get('ui-icon').prototype.connectedCallback);

define('task-bar',`<style>
:host{display:flex;height:60px;background:#1c1c1c;border-top:1px solid #484848;box-sizing:border-box;align-items:center;color:#fff}
.w{display:flex;width:530px;align-items:center;flex:none}
.sun{position:relative;margin-left:24px}
.sun b{position:absolute;left:14.500px;top:-8px;width:20px;height:20px;border-radius:50%;background:#ff99a4;color:#222;font:400 13px/20px "Open Sans";text-align:center}
.wt{margin-left:10px}
.p{margin-left:17px;width:275px;height:40px;border-radius:20px;background:#3b3b3b;border:1px solid #4b4b4b;border-top-color:#606060;box-sizing:border-box;display:flex;align-items:center;padding:0 12px 0 14px;color:#cfcfcf}
.apps{display:flex;margin-left:5px;flex:none}
.tray{display:flex;margin-left:auto;align-items:center;padding-right:24px}
.col{display:flex;flex-direction:column;align-items:center}
.col.r{align-items:flex-end}
</style><div class="w"><div class="sun"><ui-icon name="haze" size="30"></ui-icon><b>8</b></div><div class="wt"><fit-text w="32" size="14.300">26°C</fit-text><fit-text w="33" size="14.300" style="color:#c8c8c8;margin-top:1px">Haze</fit-text></div></div>
<ui-icon name="win" size="29"></ui-icon>
<div class="p"><ui-icon name="search" size="19"></ui-icon><fit-text w="52" size="16.600" style="margin-left:12px">Search</fit-text><ui-icon name="engine" size="50" style="margin-left:auto"></ui-icon></div>
<div class="apps"><task-app icon="taskview" idle></task-app><task-app icon="files"></task-app><task-app icon="store" idle></task-app><task-app icon="postman"></task-app><task-app icon="chrome" active badge="L" bs="background:#7b1fa2;color:#d9c2e4;font-size:12px"></task-app><task-app icon="ppt"></task-app><task-app icon="cursor"></task-app><task-app icon="telegram" badge="..62" bs="background:#ef3e36;color:#fff;font-size:11.500px;width:19px;height:14px;border-radius:4px;left:27px;top:10px;letter-spacing:-.4px"></task-app><task-app icon="word"></task-app><task-app icon="whatsapp" badge="9" bs="background:#76d3da;color:#1c1c1c"></task-app></div>
<div class="tray"><ui-icon name="up" size="20"></ui-icon><ui-icon name="cloud" size="22" style="margin-left:18px"></ui-icon><div class="col" style="margin-left:21px;gap:1px"><fit-text w="29" size="14.300">ENG</fit-text><fit-text w="15" size="14.300">IN</fit-text></div>
<ui-icon name="wifi" size="21" style="margin-left:22px"></ui-icon><ui-icon name="mute" size="21" style="margin-left:8px"></ui-icon><ui-icon name="battery" size="22" style="margin-left:8px"></ui-icon>
<div class="col r" style="margin-left:19px;gap:1px"><fit-text w="36" size="14.300">10:17</fit-text><fit-text w="77" size="14.300">23-06-2025</fit-text></div></div>`);

define('desktop-screen',`<style>
:host{display:flex;flex-direction:column;width:1920px;height:1080px;overflow:hidden;background:#808080}
main{flex:1;min-height:0;padding:43px 48px 0;overflow:hidden}
</style><browser-chrome></browser-chrome><main><store-modal></store-modal></main><task-bar></task-bar>`);
</script>
</body>
</html>
